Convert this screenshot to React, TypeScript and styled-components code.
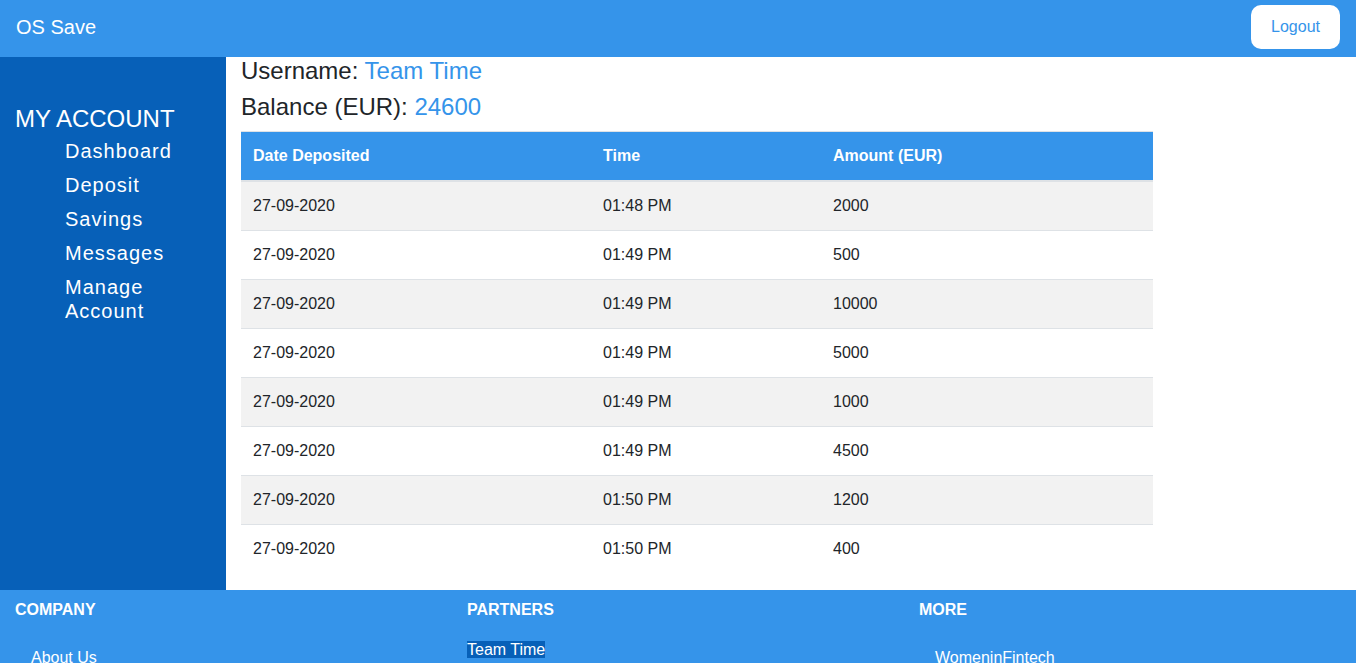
import React from "react";
import styled, { createGlobalStyle } from "styled-components";

const Global = createGlobalStyle`
  html, body { margin: 0; padding: 0; background: #fff; }
  body { font-family: "Liberation Sans", Arial, sans-serif; color: #212529; }
  #root { width: 1356px; }
  * { box-sizing: border-box; }
`;

const BLUE = "#3594ea";
const DARK = "#0760b8";

const Header = styled.header`
  height: 57px;
  background: ${BLUE};
  display: flex;
  align-items: flex-start;
  justify-content: space-between;
  padding: 0 16px;
`;

const Brand = styled.div`
  color: #fff;
  font-size: 20px;
  line-height: 24px;
  margin-top: 15px;
`;

const LogoutButton = styled.button`
  height: 44px;
  width: 89px;
  margin-top: 5px;
  background: #fff;
  color: ${BLUE};
  border: none;
  border-radius: 10px;
  font-family: "Liberation Sans", Arial, sans-serif;
  font-size: 16px;
`;

const Body = styled.div`
  display: flex;
  min-height: 533px;
`;

const Sidebar = styled.aside`
  width: 226px;
  flex: none;
  background: ${DARK};
  padding: 48px 15px 0 15px;
  color: #fff;
`;

const SideTitle = styled.div`
  font-size: 24px;
  line-height: 28px;
  margin-bottom: 6px;
`;

const SideList = styled.ul`
  list-style: none;
  margin: 0;
  padding: 0 0 0 50px;
`;

const SideItem = styled.li`
  font-size: 20px;
  line-height: 24px;
  letter-spacing: 1px;
  margin-bottom: 10px;
`;

const Main = styled.main`
  flex: 1;
  padding: 0 15px 17px 15px;
`;

const Info = styled.h4<{ $top?: number }>`
  margin: ${(p) => p.$top ?? 0}px 0 8px 0;
  font-size: 24px;
  font-weight: 400;
  line-height: 28px;
  color: #212529;
`;

const Value = styled.span`
  color: ${BLUE};
`;

const Table = styled.table`
  width: 912px;
  border-collapse: collapse;
  font-size: 16px;
  margin-top: 10px;
`;

const Th = styled.th<{ $w: number }>`
  width: ${(p) => p.$w}px;
  text-align: left;
  background: ${BLUE};
  color: #fff;
  font-weight: 700;
  padding: 12px;
  line-height: 24px;
  border-top: 1px solid #dee2e6;
  border-bottom: 2px solid #dee2e6;
`;

const Tr = styled.tr<{ $odd: boolean }>`
  background: ${(p) => (p.$odd ? "#f2f2f2" : "#fff")};
  &:last-child td {
    border-bottom: none;
  }
`;

const Td = styled.td`
  padding: 12px;
  line-height: 24px;
  border-bottom: 1px solid #dee2e6;
  color: #212529;
`;

const Footer = styled.footer`
  background: ${BLUE};
  display: grid;
  grid-template-columns: repeat(3, 1fr);
  height: 73px;
  overflow: hidden;
  color: #fff;
`;

const FooterCol = styled.div`
  padding: 10px 15px 0 15px;
`;

const FooterHeading = styled.div`
  font-weight: 700;
  font-size: 16px;
  line-height: 19px;
`;

const FooterList = styled.ul<{ $indent: number; $gap: number }>`
  list-style: none;
  margin: ${(p) => p.$gap}px 0 0 0;
  padding: 0 0 0 ${(p) => p.$indent}px;
`;

const FooterLink = styled.li`
  font-size: 16px;
  line-height: 19px;
`;

const Highlight = styled.span`
  background: ${DARK};
`;

const rows = [
  ["27-09-2020", "01:48 PM", "2000"],
  ["27-09-2020", "01:49 PM", "500"],
  ["27-09-2020", "01:49 PM", "10000"],
  ["27-09-2020", "01:49 PM", "5000"],
  ["27-09-2020", "01:49 PM", "1000"],
  ["27-09-2020", "01:49 PM", "4500"],
  ["27-09-2020", "01:50 PM", "1200"],
  ["27-09-2020", "01:50 PM", "400"],
];

export default function App() {
  return (
    <>
      <Global />
      <Header>
        <Brand>OS Save</Brand>
        <LogoutButton>Logout</LogoutButton>
      </Header>
      <Body>
        <Sidebar>
          <SideTitle>MY ACCOUNT</SideTitle>
          <SideList>
            <SideItem>Dashboard</SideItem>
            <SideItem>Deposit</SideItem>
            <SideItem>Savings</SideItem>
            <SideItem>Messages</SideItem>
            <SideItem>Manage Account</SideItem>
          </SideList>
        </Sidebar>
        <Main>
          <Info>
            Username: <Value>Team Time</Value>
          </Info>
          <Info $top={2}>
            Balance (EUR): <Value>24600</Value>
          </Info>
          <Table>
            <thead>
              <tr>
                <Th $w={350}>Date Deposited</Th>
                <Th $w={230}>Time</Th>
                <Th $w={332}>Amount (EUR)</Th>
              </tr>
            </thead>
            <tbody>
              {rows.map((r, i) => (
                <Tr key={i} $odd={i % 2 === 0}>
                  <Td>{r[0]}</Td>
                  <Td>{r[1]}</Td>
                  <Td>{r[2]}</Td>
                </Tr>
              ))}
            </tbody>
          </Table>
        </Main>
      </Body>
      <Footer>
        <FooterCol>
          <FooterHeading>COMPANY</FooterHeading>
          <FooterList $indent={16} $gap={29}>
            <FooterLink>About Us</FooterLink>
          </FooterList>
        </FooterCol>
        <FooterCol>
          <FooterHeading>PARTNERS</FooterHeading>
          <FooterList $indent={0} $gap={21}>
            <FooterLink>
              <Highlight>Team Time</Highlight>
            </FooterLink>
          </FooterList>
        </FooterCol>
        <FooterCol>
          <FooterHeading>MORE</FooterHeading>
          <FooterList $indent={16} $gap={29}>
            <FooterLink>WomeninFintech</FooterLink>
          </FooterList>
        </FooterCol>
      </Footer>
    </>
  );
}
